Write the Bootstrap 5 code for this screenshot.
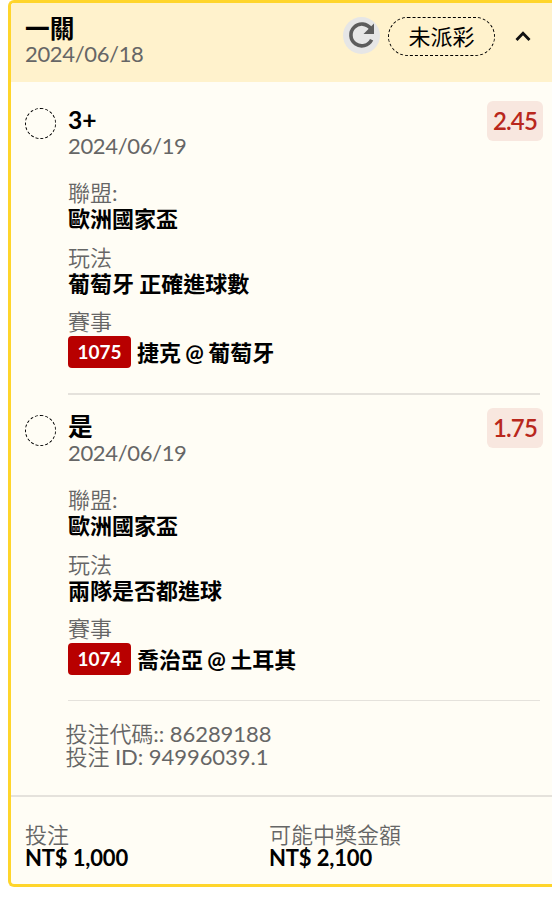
<!DOCTYPE html>
<html lang="zh-Hant">
<head>
<meta charset="utf-8">
<meta name="viewport" content="width=device-width, initial-scale=1">
<title>一關</title>
<link href="https://cdn.jsdelivr.net/npm/bootstrap@5.3.0/dist/css/bootstrap.min.css" rel="stylesheet">
<style>
body{font-family:Lato,"Noto Sans CJK TC",sans-serif;font-size:22px;line-height:25px;color:#000;background:#fff;overflow:hidden}
.slip{margin-left:8px;height:887px;border:3px solid #ffd52b;border-right:0;border-radius:6px 0 0 6px;background:#fffdf5}
.slip-head{height:79px;padding:14px 7px 0 14px;background:#fff2cc;border-top-left-radius:3px}
.heading{font-size:24.7px;font-weight:700;line-height:25px}
.muted,.field dt{color:#666;font-weight:400;font-family:Lato,"Noto Sans CJK TC DemiLight","Noto Sans CJK TC Light","Noto Sans CJK TC",sans-serif}
.date{letter-spacing:-.35px}
.slip-head .heading{margin-top:-1px}
.refresh{width:37px;height:37px;background:#e6e6e6}
.state{width:107px;height:39px;border:1px dashed #000;border-radius:20px;line-height:38px}
.leg{padding:19px 0 0 14px;height:307px}
.ring{width:31px;height:31px;border:1px dashed #000;margin:7px 12px 0 0}
.leg-body{width:472px}
.leg-title{height:79px}
.leg-title>div:first-child{padding-top:6px}
.leg-title .date{margin-top:1px}
.odds{width:56px;height:40px;border-radius:6px;background:#f8e7df;color:#b9271c;font-size:24px;font-weight:600;letter-spacing:-.9px;line-height:40px;margin-right:-3px}
.field{margin:0;height:65px}
.field dt{line-height:26px}
.field dd{margin:0;font-weight:700;line-height:26px}
.leg .event{margin-top:-1px;height:66px}
.code{width:63px;height:32px;margin-top:1px;border-radius:4px;background:#b80000;color:#fff;font-size:19px;line-height:32px}
.match{margin-left:6px;padding-top:5px;word-spacing:-1px}
.rule{height:2px;margin-top:18px;background:#e5e2dc}
.thin{height:1px}
.ids{padding:26px 0 0 54.5px;height:99px;line-height:23px;letter-spacing:-.05px}
.slip-foot{padding:26px 0 0 14px;line-height:23px;border-top:2px solid #e5e2dc}
.stake{width:244px}
.amount{font-weight:700;letter-spacing:-.15px}
</style>
</head>
<body>
<main class="slip">
  <header class="slip-head d-flex justify-content-between">
    <div><div class="heading">一關</div><div class="muted date">2024/06/18</div></div>
    <div class="d-flex">
      <div class="refresh rounded-circle"><svg class="d-block" width="37" height="37" viewBox="0 0 37 37"><path d="M27.8 11.8A10.9 10.9 0 1 0 28.6 22.8" fill="none" stroke="#5c5c5c" stroke-width="3.6"/><path d="M31 6.5V17H20.5Z" fill="#5c5c5c"/></svg></div>
      <div class="state text-center ms-2">未派彩</div>
      <svg width="50" height="39" viewBox="0 0 50 39"><path d="M21.5 23 28 16.200 34.500 23" fill="none" stroke="#111" stroke-width="2.8"/></svg>
    </div>
  </header>

  <section class="leg d-flex">
    <div class="ring rounded-circle flex-shrink-0"></div>
    <div class="leg-body">
      <div class="leg-title d-flex justify-content-between">
        <div><div class="heading">3+</div><div class="muted date">2024/06/19</div></div>
        <div class="odds text-center">2.45</div>
      </div>
      <dl class="field"><dt>聯盟:</dt><dd>歐洲國家盃</dd></dl>
      <dl class="field"><dt>玩法</dt><dd>葡萄牙 正確進球數</dd></dl>
      <dl class="field event"><dt>賽事</dt><dd class="d-flex"><span class="code text-center">1075</span><span class="match">捷克 @ 葡萄牙</span></dd></dl>
      <div class="rule"></div>
    </div>
  </section>

  <section class="leg d-flex">
    <div class="ring rounded-circle flex-shrink-0"></div>
    <div class="leg-body">
      <div class="leg-title d-flex justify-content-between">
        <div><div class="heading">是</div><div class="muted date">2024/06/19</div></div>
        <div class="odds text-center">1.75</div>
      </div>
      <dl class="field"><dt>聯盟:</dt><dd>歐洲國家盃</dd></dl>
      <dl class="field"><dt>玩法</dt><dd>兩隊是否都進球</dd></dl>
      <dl class="field event"><dt>賽事</dt><dd class="d-flex"><span class="code text-center">1074</span><span class="match">喬治亞 @ 土耳其</span></dd></dl>
      <div class="rule thin"></div>
    </div>
  </section>

  <div class="ids muted"><div>投注代碼:: 86289188</div><div>投注 ID: 94996039.1</div></div>

  <footer class="slip-foot d-flex">
    <div class="stake"><div class="muted">投注</div><div class="amount">NT$ 1,000</div></div>
    <div><div class="muted">可能中獎金額</div><div class="amount">NT$ 2,100</div></div>
  </footer>
</main>
<script src="https://cdn.jsdelivr.net/npm/bootstrap@5.3.0/dist/js/bootstrap.bundle.min.js"></script>
</body>
</html>
